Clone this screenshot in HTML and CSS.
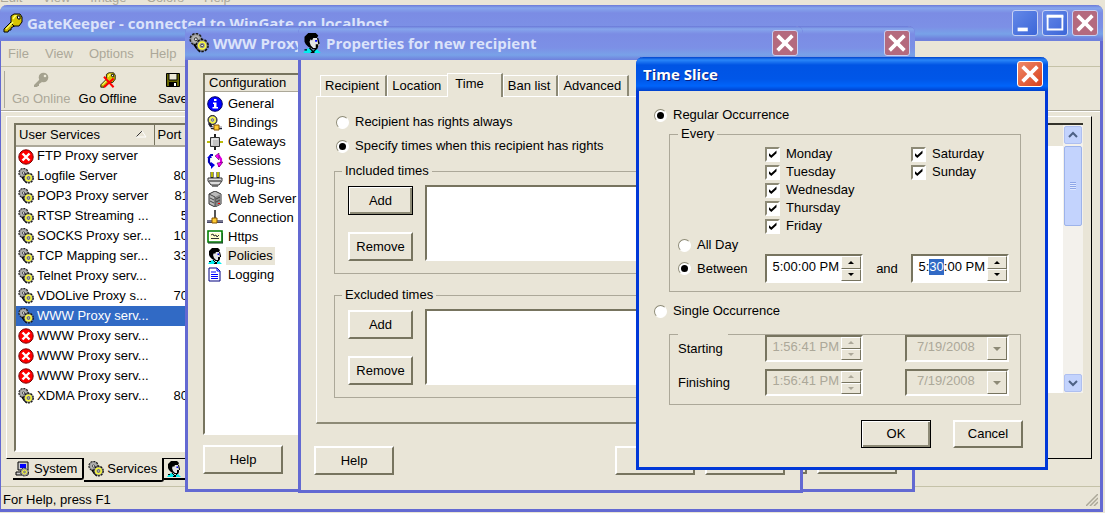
FILE: index.html
```html
<!DOCTYPE html>
<html lang="en">
<head>
    <meta charset="UTF-8">
    <meta name="viewport" content="width=device-width, initial-scale=1.0">
    <title>GateKeeper</title>
    <link rel="stylesheet" href="styles.css">
</head>
<body>
    <!-- Icon set -->
    <svg class="icon-set" aria-hidden="true">
        <symbol id="i-key" viewBox="0 0 20 20">
            <path d="M9 8L1 16v3h4l1-2h2v-2l5-3z" fill="#c8b400" stroke="#000"/>
            <path d="M8 3l3-2h6l2 3v5l-3 4h-5l-3-3z" fill="#d8c400" stroke="#000"/>
            <path d="M10 6l2-3h3M3 16l7-7" stroke="#ffff66" stroke-width="1.500" fill="none"/>
            <path d="M14 3h3v3h-2z" fill="#fff" stroke="#000"/>
        </symbol>
        <symbol id="i-key-off" viewBox="0 0 16 16">
            <path d="M7 7L1 13v2h3l1-1h1v-2l3-2z" fill="#a5a28f"/>
            <circle cx="10.500" cy="5.500" r="4.800" fill="#a5a28f"/>
            <circle cx="12" cy="4" r="1.300" fill="#ece9d8"/>
        </symbol>
        <symbol id="i-gears" viewBox="0 0 16 16">
            <circle cx="5.500" cy="5" r="4.600" fill="#999" stroke="#222" stroke-width="1.200" stroke-dasharray="2 1"/>
            <circle cx="5.500" cy="5" r="3" fill="#b4b4b4"/>
            <circle cx="5.500" cy="5" r="1.200" fill="#eee" stroke="#333" stroke-width=".8"/>
            <path d="M4 9l2 3 3 3" stroke="#000" stroke-width="1.500" fill="none"/>
            <circle cx="10.500" cy="10" r="4.800" fill="#888" stroke="#111" stroke-width="1.200" stroke-dasharray="2 1"/>
            <circle cx="10.500" cy="10" r="2.800" fill="#999" stroke="#ffff33" stroke-width="1.300"/>
            <circle cx="10.500" cy="10" r="1" fill="#fff" stroke="#222" stroke-width=".6"/>
        </symbol>
        <symbol id="i-error" viewBox="0 0 16 16">
            <circle cx="8" cy="8" r="7.200" fill="#f00" stroke="#700"/>
            <path d="M4.500 4.500l7 7M11.500 4.500l-7 7" stroke="#fff" stroke-width="2.400"/>
        </symbol>
        <symbol id="i-info" viewBox="0 0 16 16">
            <circle cx="8" cy="8" r="7.300" fill="#00f" stroke="#006"/>
            <path d="M7 3h2.500v2H7zM6 6.500h3.500V11H11v1.500H5.500V11H7V8H6z" fill="#fff"/>
        </symbol>
        <symbol id="i-bind" viewBox="0 0 16 16">
            <circle cx="5.500" cy="5" r="4.500" fill="#999" stroke="#111"/>
            <circle cx="5.500" cy="5" r="2.800" fill="#bbb" stroke="#ff3" stroke-width="1.300"/>
            <circle cx="5.500" cy="5" r="1" fill="#fff" stroke="#222" stroke-width=".6"/>
            <path d="M2 8l3 5h10" stroke="#223" stroke-width="2.500" fill="none"/>
            <path d="M3 12.500h12" stroke="#bbc"/>
            <path d="M7 10h5v5H7z" fill="#fc3" stroke="#850"/>
        </symbol>
        <symbol id="i-gateway" viewBox="0 0 16 16">
            <path d="M0 8h16M8 0v16" stroke="#222" stroke-width="2"/>
            <path d="M0 8h3M13 8h3" stroke="#ee0" stroke-width="1.500"/>
            <path d="M3.500 3.500h9v9h-9z" fill="#c4c4c4" stroke="#333"/>
            <path d="M5 11V5h6" stroke="#fff" fill="none"/>
        </symbol>
        <symbol id="i-session" viewBox="0 0 16 16">
            <path d="M6 2H4L2 5v4l2 3h2" fill="none" stroke="#0000b0" stroke-width="2.200"/>
            <path d="M4 9l4 3-4 4zM0 5l3-3 2 3z" fill="#0000e0"/>
            <path d="M10 3h2l2 3v4l-2 3h-1" fill="none" stroke="#d0d" stroke-width="2.200"/>
            <path d="M12 0L8 3l4 4zM16 9l-4 5-2-4z" fill="#f0f" stroke="#303" stroke-width=".5"/>
        </symbol>
        <symbol id="i-plug" viewBox="0 0 16 16">
            <path d="M5 0v6M11 0v6" stroke="#111" stroke-width="3"/>
            <path d="M5 0v5M11 0v5" stroke="#ee0" stroke-width="1.500"/>
            <path d="M1 6h14v3l-3 4H4L1 9z" fill="#ddd" stroke="#333"/>
            <path d="M2 9h12M5 14h6" stroke="#555" stroke-width="1.500"/>
        </symbol>
        <symbol id="i-server" viewBox="0 0 16 16">
            <path d="M2 3l6-3 6 3v10l-6 3-6-3z" fill="#bbb" stroke="#333"/>
            <path d="M8 6l6-3v10l-6 3z" fill="#888"/>
            <path d="M2 3l6 3v10M3 7l4 2M3 10l4 2M9 8l4-2M9 11l4-2" stroke="#444" fill="none"/>
            <path d="M11 12h2v1h-2z" fill="#f00"/>
        </symbol>
        <symbol id="i-conn" viewBox="0 0 16 16">
            <path d="M8 0v9" stroke="#555" stroke-width="2"/>
            <path d="M0 11.500h16" stroke="#446" stroke-width="3"/>
            <path d="M0 11h16" stroke="#aab"/>
            <path d="M5 8h5v5H5z" fill="#fc3" stroke="#850"/>
        </symbol>
        <symbol id="i-https" viewBox="0 0 16 16">
            <path d="M1 2h14v11H1z" fill="#fff" stroke="#008000" stroke-width="1.600"/>
            <path d="M3 4h10v7H3z" fill="#ffc"/>
            <path d="M4 6l2-1 1 2 2-1 1 2 2-2M4 9.500h8" stroke="#333" fill="none"/>
            <path d="M1 14h15V4" stroke="#031" fill="none"/>
        </symbol>
        <symbol id="i-person" viewBox="0 0 16 16">
            <path d="M5 5l4-2h3l1 3 1 3-1 2-1 2H8L5 10z" fill="#e4e4e4"/>
            <path d="M2 3l3-3h6l2 2-1 2H9L8 6 7 5 6 7l1 3 2 2v1L5 11 3 9 2 7z"/>
            <path d="M12 4h1l1 4v1h-1v2l-1 2H8v-1h3v-3h2z"/>
            <path d="M10.500 5.500h1.500v1.500h-1.500z" fill="#00f"/>
            <path d="M1 16l2-3 3-1 3 2 3-1 3 3z" fill="#0ee"/>
            <path d="M6 12l3 3 3-3M2 13.500h2M7 15.500h3" stroke="#000" fill="none"/>
        </symbol>
        <symbol id="i-log" viewBox="0 0 16 16">
            <path d="M2 1h8l3 3v10H2z" fill="#fff" stroke="#000080"/>
            <path d="M10 1v3h3M4 5h5M4 7.500h7M4 9.500h7M4 11.500h7" stroke="#00f" fill="none"/>
        </symbol>
        <symbol id="i-system" viewBox="0 0 16 16">
            <path d="M3 1h10v8H3zM1 11h12v3H1z" fill="#ccc" stroke="#000"/>
            <path d="M5 3h6v4H5z" fill="#00f"/>
            <circle cx="9.500" cy="11" r="4" fill="#999" stroke="#222" stroke-dasharray="2 1"/>
            <circle cx="9.500" cy="11" r="2" fill="#888" stroke="#ff3"/>
        </symbol>
        <symbol id="i-save" viewBox="0 0 16 16">
            <path d="M1.500 1.500h13v13h-13z" fill="#660" stroke="#000"/>
            <path d="M4 1.500h8V8H4z" fill="#ece9d8" stroke="#000"/>
            <path d="M4 10h8v5H4z"/>
            <path d="M9 11h2v3H9z" fill="#fff"/>
        </symbol>
        <symbol id="i-close" viewBox="0 0 26 26">
            <path d="M5 5l16 16M21 5L5 21" stroke="#fff" stroke-width="4"/>
        </symbol>
    </svg>

    <div class="desktop">
        <div class="paint-menu"><span>Edit</span><span>View</span><span>Image</span><span>Colors</span><span>Help</span></div>

        <!-- Main window -->
        <section class="window main-window">
            <header class="title-bar">
                <svg class="title-icon"><use href="#i-key"/></svg>
                <h1>GateKeeper - connected to WinGate on localhost</h1>
                <button class="caption-btn caption-blue" aria-label="Minimize"><svg viewBox="0 0 26 26"><path d="M5 18h11v4H5z" fill="#fff"/></svg></button>
                <button class="caption-btn caption-blue" aria-label="Maximize"><svg viewBox="0 0 26 26"><path d="M5 6h16v14H5z" fill="none" stroke="#fff" stroke-width="2"/><path d="M4 4h18v3H4z" fill="#fff"/></svg></button>
                <button class="caption-btn" aria-label="Close"><svg><use href="#i-close"/></svg></button>
            </header>
            <nav class="menu-bar">
                <a href="#">File</a><a href="#">View</a><a href="#">Options</a><a href="#">Help</a>
            </nav>
            <div class="toolbar">
                <button disabled><svg><use href="#i-key-off"/></svg>Go Online</button>
                <button><svg viewBox="0 0 20 20"><use href="#i-key"/><path d="M5 6l12 13M17 8L5 19" stroke="#f00" stroke-width="2.500"/></svg>Go Offline</button>
                <button><svg><use href="#i-save"/></svg>Save</button>
            </div>
            <main class="workspace">
                <div class="panel">
                    <div class="services">
                        <table>
                            <thead>
                                <tr><th class="col-name">User Services <svg class="sort" viewBox="0 0 12 8"><path d="M1 7l6-6" stroke="#333"/><path d="M7 1l4 6H1" stroke="#fff" fill="none"/></svg></th><th>Port</th></tr>
                            </thead>
                            <tbody>
                                <tr><td><svg class="icon"><use href="#i-error"/></svg>FTP Proxy server</td><td></td></tr>
                                <tr><td><svg class="icon"><use href="#i-gears"/></svg>Logfile Server</td><td>8010</td></tr>
                                <tr><td><svg class="icon"><use href="#i-gears"/></svg>POP3 Proxy server</td><td>8110</td></tr>
                                <tr><td><svg class="icon"><use href="#i-gears"/></svg>RTSP Streaming ...</td><td>554</td></tr>
                                <tr><td><svg class="icon"><use href="#i-gears"/></svg>SOCKS Proxy ser...</td><td>1080</td></tr>
                                <tr><td><svg class="icon"><use href="#i-gears"/></svg>TCP Mapping ser...</td><td>3389</td></tr>
                                <tr><td><svg class="icon"><use href="#i-gears"/></svg>Telnet Proxy serv...</td><td>23</td></tr>
                                <tr><td><svg class="icon"><use href="#i-gears"/></svg>VDOLive Proxy s...</td><td>7000</td></tr>
                                <tr class="selected"><td><svg class="icon"><use href="#i-gears"/></svg>WWW Proxy serv...</td><td>80</td></tr>
                                <tr><td><svg class="icon"><use href="#i-error"/></svg>WWW Proxy serv...</td><td></td></tr>
                                <tr><td><svg class="icon"><use href="#i-error"/></svg>WWW Proxy serv...</td><td></td></tr>
                                <tr><td><svg class="icon"><use href="#i-error"/></svg>WWW Proxy serv...</td><td></td></tr>
                                <tr><td><svg class="icon"><use href="#i-gears"/></svg>XDMA Proxy serv...</td><td>8000</td></tr>
                            </tbody>
                        </table>
                    </div>
                    <div class="details">
                        <div class="details-body"></div>
                        <div class="scrollbar">
                            <button aria-label="Scroll up"><svg viewBox="0 0 10 8"><path d="M1 6l4-4 4 4" fill="none" stroke="#4d6185" stroke-width="2"/></svg></button>
                            <div class="thumb"></div>
                            <button aria-label="Scroll down"><svg viewBox="0 0 10 8"><path d="M1 2l4 4 4-4" fill="none" stroke="#4d6185" stroke-width="2"/></svg></button>
                        </div>
                    </div>
                </div>
                <div class="bottom-tabs">
                    <button><svg class="icon"><use href="#i-system"/></svg>System</button>
                    <button class="active"><svg class="icon"><use href="#i-gears"/></svg>Services</button>
                    <button aria-label="Users"><svg class="icon"><use href="#i-person"/></svg></button>
                </div>
            </main>
            <footer class="status-bar">For Help, press F1
                <svg class="grip" viewBox="0 0 12 12"><path d="M0 12L12 0M4 12l8-8M8 12l4-4" stroke="#aca899" stroke-width="1.500"/></svg>
            </footer>
        </section>

        <!-- Proxy properties -->
        <section class="window proxy-window">
            <header class="title-bar">
                <svg class="title-icon"><use href="#i-gears"/></svg>
                <h2>WWW Proxy</h2>
                <button class="caption-btn" aria-label="Close"><svg><use href="#i-close"/></svg></button>
            </header>
            <div class="proxy-body">
                <div class="config">
                    <h3>Configuration</h3>
                    <ul>
                        <li><svg class="icon"><use href="#i-info"/></svg><span>General</span></li>
                        <li><svg class="icon"><use href="#i-bind"/></svg><span>Bindings</span></li>
                        <li><svg class="icon"><use href="#i-gateway"/></svg><span>Gateways</span></li>
                        <li><svg class="icon"><use href="#i-session"/></svg><span>Sessions</span></li>
                        <li><svg class="icon"><use href="#i-plug"/></svg><span>Plug-ins</span></li>
                        <li><svg class="icon"><use href="#i-server"/></svg><span>Web Server</span></li>
                        <li><svg class="icon"><use href="#i-conn"/></svg><span>Connection</span></li>
                        <li><svg class="icon"><use href="#i-https"/></svg><span>Https</span></li>
                        <li class="current"><svg class="icon"><use href="#i-person"/></svg><span>Policies</span></li>
                        <li><svg class="icon"><use href="#i-log"/></svg><span>Logging</span></li>
                    </ul>
                </div>
                <div class="button-row">
                    <button class="btn first">Help</button>
                    <button class="btn" aria-label="OK"></button>
                    <button class="btn" aria-label="Cancel"></button>
                </div>
            </div>
        </section>

        <!-- Recipient properties -->
        <section class="window recipient-window">
            <header class="title-bar">
                <svg class="title-icon"><use href="#i-person"/></svg>
                <h2>Properties for new recipient</h2>
                <button class="caption-btn" aria-label="Close"><svg><use href="#i-close"/></svg></button>
            </header>
            <div class="recipient-body">
                <div class="tabs">
                    <button>Recipient</button>
                    <button>Location</button>
                    <button class="active">Time</button>
                    <button>Ban list</button>
                    <button>Advanced</button>
                </div>
                <div class="tab-page">
                    <label class="option"><input type="radio" name="rights">Recipient has rights always</label>
                    <label class="option"><input type="radio" name="rights" checked>Specify times when this recipient has rights</label>
                    <fieldset class="times">
                        <legend>Included times</legend>
                        <div class="times-buttons">
                            <button class="btn default">Add</button>
                            <button class="btn">Remove</button>
                        </div>
                        <div class="list-box"></div>
                    </fieldset>
                    <fieldset class="times">
                        <legend>Excluded times</legend>
                        <div class="times-buttons">
                            <button class="btn">Add</button>
                            <button class="btn">Remove</button>
                        </div>
                        <div class="list-box"></div>
                    </fieldset>
                </div>
                <div class="button-row">
                    <button class="btn first">Help</button>
                    <button class="btn" aria-label="OK"></button>
                    <button class="btn" aria-label="Cancel"></button>
                </div>
            </div>
        </section>

        <!-- Time slice dialog -->
        <section class="window active-window slice-window">
            <header class="title-bar">
                <h2>Time Slice</h2>
                <button class="caption-btn" aria-label="Close"><svg><use href="#i-close"/></svg></button>
            </header>
            <form class="slice-body">
                <label class="option"><input type="radio" name="occurrence" checked>Regular Occurrence</label>
                <fieldset class="slice-grid every">
                    <legend>Every</legend>
                    <div class="days weekdays">
                        <label><input type="checkbox" checked>Monday</label>
                        <label><input type="checkbox" checked>Tuesday</label>
                        <label><input type="checkbox" checked>Wednesday</label>
                        <label><input type="checkbox" checked>Thursday</label>
                        <label><input type="checkbox" checked>Friday</label>
                    </div>
                    <div class="days weekend">
                        <label><input type="checkbox" checked>Saturday</label>
                        <label><input type="checkbox" checked>Sunday</label>
                    </div>
                    <label class="option all-day"><input type="radio" name="hours">All Day</label>
                    <label class="option"><input type="radio" name="hours" checked>Between</label>
                    <div class="time-box">
                        <input type="text" value="5:00:00 PM" aria-label="From">
                        <div class="spin"><button type="button" aria-label="Up"></button><button type="button" aria-label="Down"></button></div>
                    </div>
                    <span class="and">and</span>
                    <div class="time-box">
                        <input type="text" id="until" value="5:30:00 PM" aria-label="Until">
                        <div class="spin"><button type="button" aria-label="Up"></button><button type="button" aria-label="Down"></button></div>
                    </div>
                </fieldset>
                <label class="option"><input type="radio" name="occurrence">Single Occurrence</label>
                <fieldset class="slice-grid single">
                    <legend></legend>
                    <label for="startTime">Starting</label>
                    <div class="time-box disabled">
                        <input type="text" id="startTime" value="1:56:41 PM" disabled>
                        <div class="spin"><button type="button" aria-label="Up" disabled></button><button type="button" aria-label="Down" disabled></button></div>
                    </div>
                    <div class="date-box">
                        <select aria-label="Starting date" disabled><option>7/19/2008</option></select>
                        <span class="drop"></span>
                    </div>
                    <label for="endTime">Finishing</label>
                    <div class="time-box disabled">
                        <input type="text" id="endTime" value="1:56:41 PM" disabled>
                        <div class="spin"><button type="button" aria-label="Up" disabled></button><button type="button" aria-label="Down" disabled></button></div>
                    </div>
                    <div class="date-box">
                        <select aria-label="Finishing date" disabled><option>7/19/2008</option></select>
                        <span class="drop"></span>
                    </div>
                </fieldset>
                <div class="slice-buttons">
                    <button type="button" class="btn default">OK</button>
                    <button type="button" class="btn">Cancel</button>
                </div>
            </form>
        </section>
    </div>

    <script>
        // Minutes are selected when the dialog opens
        const until = document.getElementById('until');
        until.focus();
        until.setSelectionRange(2, 4);
    </script>
</body>
</html>
```
FILE: styles.css
```css
* {
    box-sizing: border-box;
}

body {
    margin: 0;
    font-family: "Liberation Sans", Arial, sans-serif;
    font-size: 13px;
    line-height: 16px;
    color: #000;
}

button, input, select {
    font: inherit;
    color: inherit;
    margin: 0;
    padding: 0;
    border: 0;
    border-radius: 0;
    outline: none;
}

h1, h2, h3, ul {
    margin: 0;
    padding: 0;
}

fieldset {
    margin: 0;
    min-width: 0;
    border: 1px solid #aca899;
}

legend {
    padding: 0 3px;
}

.icon-set {
    display: none;
}

.icon {
    width: 16px;
    height: 16px;
    flex: none;
}

.desktop {
    position: relative;
    height: 100vh;
    min-height: 513px;
    overflow: hidden;
    background: #e9e5d7;
}

/* Menu of the program behind, mostly covered */
.paint-menu {
    display: flex;
    gap: 20px;
    margin-top: -10px;
    color: #aca899;
}

/* Windows */
.window {
    position: absolute;
    display: flex;
    flex-direction: column;
    background: #e9e5d7;
    border: 3px solid #6369d2;
    border-top: 0;
    border-radius: 7px 7px 0 0;
}

.main-window {
    top: 5px;
    left: 0;
    right: 2px;
    bottom: 1px;
    border-left-width: 1px;
}

.proxy-window {
    top: 26px;
    left: 185px;
    width: 730px;
}

.recipient-window {
    top: 26px;
    left: 298px;
    width: 505px;
}

.slice-window {
    top: 57px;
    left: 636px;
    width: 412px;
}

.active-window {
    border-color: #0038d8;
}

.title-bar {
    display: flex;
    align-items: center;
    flex: none;
    gap: 4px;
    height: 34px;
    margin: 0 -3px;
    padding: 0 5px 0 4px;
    border-radius: 7px 7px 0 0;
    background: linear-gradient(#6b79d8 0, #86a6ec 3px, #7b8ce4 8px, #7c90e6 22px, #78a2e8 29px, #6f80dc 34px);
}

.main-window .title-bar {
    height: 36px;
    margin-left: -1px;
    padding-left: 3px;
}

.active-window .title-bar {
    padding-left: 7px;
    background: linear-gradient(#0044cc 0, #2a86f8 3px, #0054e4 8px, #0056e8 22px, #0064fa 29px, #0040cc 34px);
}

.title-bar h1, .title-bar h2 {
    flex: 1;
    font-family: "Open Sans", "Noto Sans", sans-serif;
    font-size: 15px;
    font-weight: bold;
    line-height: 20px;
    color: #dbe3fa;
    white-space: nowrap;
    overflow: hidden;
}

.active-window .title-bar h2 {
    color: #fff;
    text-shadow: 1px 1px #0a1e80;
}

.title-icon {
    width: 20px;
    height: 20px;
    flex: none;
}

.caption-btn {
    flex: none;
    width: 26px;
    height: 26px;
    border: 1px solid #c8d2f4;
    border-radius: 3px;
    background: #b46a7e;
}

.caption-btn svg {
    display: block;
    width: 24px;
    height: 24px;
}

.caption-blue {
    background: linear-gradient(135deg, #6488e8, #3c66d8);
}

.active-window .caption-btn {
    border-color: #fff;
    background: linear-gradient(135deg, #f08a68, #d8401c);
}

/* Buttons */
.btn {
    width: 80px;
    height: 29px;
    background: #e9e5d7;
    border: 2px solid;
    border-color: #fff #77745f #77745f #fff;
}

.btn.default {
    border: 1px solid #000;
    box-shadow: inset 1px 1px #fff, inset -2px -2px #8d8a76;
}

.button-row {
    display: flex;
    gap: 10px;
}

.button-row .first {
    margin-right: auto;
}

/* Main window */
.menu-bar {
    display: flex;
    align-items: center;
    gap: 16px;
    height: 26px;
    padding: 0 7px;
    border-bottom: 1px solid #c5c2a8;
}

.menu-bar a {
    color: #aca899;
    text-decoration: none;
}

.toolbar {
    display: flex;
    gap: 2px;
    height: 44px;
    padding: 4px 0 2px 3px;
    border-bottom: 1px solid #aca899;
    box-shadow: 0 1px #fff;
}

.toolbar::before {
    content: "";
    width: 2px;
    border-left: 1px solid #aca899;
}

.toolbar button {
    display: flex;
    flex-direction: column;
    align-items: center;
    gap: 3px;
    min-width: 62px;
    padding: 1px 3px;
    background: none;
    white-space: nowrap;
}

.toolbar button:disabled {
    color: #aca899;
}

.toolbar svg {
    width: 16px;
    height: 16px;
}

.workspace {
    display: flex;
    flex-direction: column;
    flex: 1;
    padding: 5px 8px 0 5px;
}

.panel {
    display: flex;
    flex: 1;
    padding: 6px 8px 6px 7px;
    border: 1px solid #000;
    border-color: #fff #000 #000 #fff;
}

.services {
    width: 300px;
    background: #fff;
    border: 2px solid;
    border-color: #77745f #fff #fff #77745f;
}

.services table {
    width: 100%;
    border-collapse: collapse;
    table-layout: fixed;
}

.services th {
    height: 21px;
    padding: 0 3px;
    text-align: left;
    font-weight: normal;
    background: #e9e5d7;
    border-bottom: 2px solid #aca899;
    border-right: 1px solid #77745f;
}

.services .col-name {
    width: 138px;
}

.sort {
    float: right;
    width: 12px;
    height: 8px;
    margin: 3px 4px 0 0;
}

.services td {
    height: 20px;
    padding: 0 0 0 2px;
    white-space: nowrap;
}

.services td:nth-child(2) {
    text-align: right;
    padding-right: 109px;
}

.services td .icon {
    margin-right: 3px;
    vertical-align: middle;
}

.services .selected td {
    color: #fff;
    background: #316ac5;
}

.details {
    display: flex;
    flex: 1;
    margin-bottom: 59px;
    background: #fff;
    border-top: 2px solid #33322a;
}

.details-body {
    flex: 1;
    border-top: 21px solid #e9e5d7;
}

.scrollbar {
    display: flex;
    flex-direction: column;
    width: 20px;
    padding: 1px;
    background: #f3f1ec;
}

.scrollbar button {
    display: flex;
    align-items: center;
    justify-content: center;
    height: 18px;
    background: #c3d3fd;
    border: 1px solid #aebff0;
    border-radius: 2px;
}

.scrollbar button svg {
    width: 10px;
    height: 8px;
}

.scrollbar button:last-child {
    margin-top: auto;
}

.thumb {
    height: 80px;
    margin-top: 2px;
    border: 1px solid #9db3ea;
    border-radius: 2px;
    background: repeating-linear-gradient(#8ea6e8 0 1px, #dfe8ff 1px 2px) center / 6px 8px no-repeat, #c3d3fd;
}

.bottom-tabs {
    display: flex;
    align-items: flex-start;
    height: 27px;
    padding-left: 7px;
}

.bottom-tabs button {
    display: flex;
    align-items: center;
    gap: 3px;
    height: 21px;
    padding: 0 5px 0 2px;
    background: #e9e5d7;
    border: 1px solid #000;
    border-width: 0 2px 2px 0;
    border-radius: 0 0 3px 0;
}

.bottom-tabs .active {
    height: 24px;
    margin-top: -1px;
    padding: 0 5px 0 4px;
}

.status-bar {
    display: flex;
    align-items: center;
    justify-content: space-between;
    height: 23px;
    padding: 4px 2px 0;
    border-top: 1px solid #c5c2a8;
}

.grip {
    width: 12px;
    height: 12px;
}

/* Proxy window */
.proxy-body {
    padding: 13px 15px 15px;
}

.config {
    width: 200px;
    height: 362px;
    margin-bottom: 10px;
    background: #fff;
    border: 2px solid;
    border-color: #77745f #fff #fff #77745f;
}

.config h3 {
    height: 17px;
    padding-left: 4px;
    font-size: 13px;
    font-weight: normal;
    background: #e9e5d7;
    border-bottom: 1px solid #aca899;
}

.config ul {
    list-style: none;
    padding: 2px;
}

.config li {
    display: flex;
    align-items: center;
    gap: 3px;
    height: 19px;
}

.config li span {
    padding: 1px 2px;
}

.config .current span {
    background: #e9e5d7;
}

/* Recipient window */
.recipient-body {
    padding: 12px 15px 15px 13px;
}

.tabs {
    display: flex;
    align-items: flex-end;
    height: 24px;
    padding-left: 6px;
}

.tabs button {
    height: 21px;
    padding: 0 6px 0 4px;
    background: #e9e5d7;
    border: 1px solid #fff;
    border-right: 2px solid #8d8a76;
    border-bottom: 0;
}

.tabs .active {
    height: 24px;
    margin-bottom: -1px;
    padding: 0 17px 4px 7px;
}

.tabs button:has(+ .active) {
    border-right: 0;
}

.tab-page {
    display: flex;
    flex-direction: column;
    margin: 0 0 22px 2px;
    padding: 16px 17px 24px;
    border: 1px solid #fff;
    border-right-color: #8d8a76;
    border-bottom: 2px solid #8d8a76;
}

.option {
    display: flex;
    align-items: center;
    gap: 6px;
    height: 18px;
    white-space: nowrap;
}

.tab-page .option {
    margin: 0 0 6px 2px;
}

.times {
    display: flex;
    gap: 12px;
    padding: 6px 13px 12px;
    margin-top: 2px;
}

.times legend {
    margin-left: -6px;
}

.times + .times {
    margin-top: 13px;
}

.times-buttons {
    display: flex;
    flex-direction: column;
    justify-content: space-between;
    height: 76px;
    padding-top: 1px;
}

.times-buttons .btn {
    width: 65px;
}

.list-box {
    flex: 1;
    background: #fff;
    border: 2px solid;
    border-color: #77745f #fff #fff #77745f;
}

/* Radios and check boxes */
input[type="radio"], input[type="checkbox"] {
    appearance: none;
    display: grid;
    place-items: center;
    flex: none;
    background: #fff;
    border: 1px solid;
    border-color: #8d8a76 #fff #fff #8d8a76;
}

input[type="radio"] {
    width: 13px;
    height: 13px;
    border-radius: 50%;
}

input[type="radio"]:checked::after {
    content: "";
    width: 7px;
    height: 7px;
    border-radius: 50%;
    background: #000;
}

input[type="checkbox"] {
    width: 15px;
    height: 15px;
    border-width: 2px;
}

input[type="checkbox"]:checked::after {
    content: "";
    width: 8px;
    height: 8px;
    background: #000;
    clip-path: polygon(0 35%, 35% 65%, 100% 5%, 100% 40%, 35% 100%, 0 70%);
}

/* Time slice dialog */
.slice-body {
    padding: 15px 22px 19px 15px;
}

.slice-grid {
    display: grid;
    grid-template-columns: 87px 98px 1fr 98px;
    align-items: center;
    margin-left: 15px;
    margin-right: 2px;
}

.every {
    padding: 3px 11px 8px 8px;
    margin-top: 2px;
    margin-bottom: 10px;
}

.days label {
    display: flex;
    align-items: center;
    gap: 6px;
    height: 18px;
}

.weekdays {
    grid-column: 2;
}

.weekend {
    grid-column: 4;
    align-self: start;
}

.all-day {
    grid-column: 1 / -1;
    margin-top: 1px;
}

.and {
    text-align: center;
}

.time-box {
    display: flex;
    height: 29px;
    background: #fff;
    border: 2px solid;
    border-color: #77745f #fff #fff #77745f;
}

.time-box input {
    flex: 1;
    min-width: 0;
    padding: 0 2px 4px 0;
    text-align: right;
    background: none;
    caret-color: transparent;
}

.time-box input::selection {
    color: #fff;
    background: #316ac5;
}

.spin {
    display: flex;
    flex-direction: column;
    width: 20px;
}

.spin button {
    display: grid;
    place-items: center;
    flex: 1;
    background: #e9e5d7;
    border: 1px solid;
    border-color: #fff #77745f #77745f #fff;
}

.spin button::after {
    content: "";
    border: 3px solid transparent;
    border-top: 0;
    border-bottom-color: #000;
}

.spin button:last-child::after {
    border-top: 3px solid #000;
    border-bottom: 0;
}

.single {
    row-gap: 7px;
    margin-top: 14px;
    padding: 0 11px 8px 8px;
}

.single legend {
    width: 50px;
    height: 1px;
}

.single .time-box, .date-box {
    height: 27px;
    color: #aca899;
    background: #e9e5d7;
}

.disabled .spin button:first-child::after {
    border-bottom-color: #aca899;
}

.disabled .spin button:last-child::after {
    border-top-color: #aca899;
}

.date-box {
    display: flex;
    grid-column: 3 / 5;
    justify-self: end;
    width: 104px;
    border: 2px solid;
    border-color: #77745f #fff #fff #77745f;
}

.date-box select {
    flex: 1;
    appearance: none;
    padding: 0 0 4px 10px;
    background: none;
    opacity: 1;
}

.drop {
    display: grid;
    place-items: center;
    width: 20px;
    border: 1px solid;
    border-color: #fff #77745f #77745f #fff;
}

.drop::after {
    content: "";
    border: 4px solid transparent;
    border-top-color: #8d8a76;
    border-bottom: 0;
}

.slice-buttons {
    display: flex;
    justify-content: flex-end;
    gap: 22px;
    margin-top: 15px;
}

.slice-buttons .btn {
    width: 70px;
    height: 28px;
}
```
